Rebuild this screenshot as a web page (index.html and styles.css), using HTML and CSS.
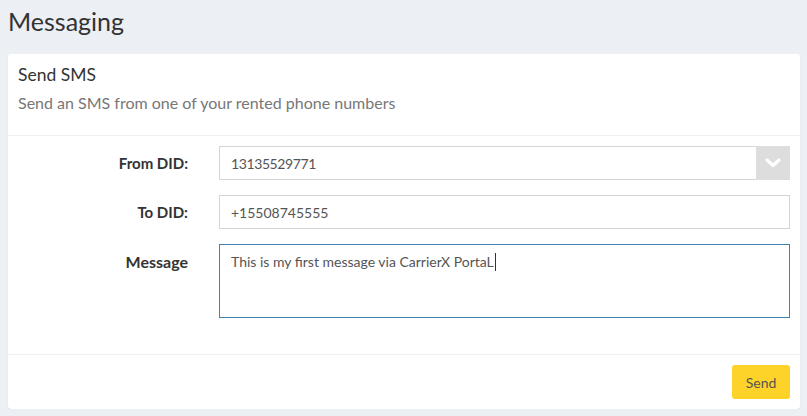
FILE: index.html
```html
<!DOCTYPE html>
<html>
<head>
<meta charset="utf-8">
<link rel="stylesheet" href="styles.css">
</head>
<body>
<h1 class="page-title">Messaging</h1>
<div class="card">
  <div class="card-header">
    <div class="card-title">Send SMS</div>
    <div class="card-sub">Send an SMS from one of your rented phone numbers</div>
  </div>
  <div class="card-body">
    <div class="row">
      <label class="lbl">From DID:</label>
      <div class="select">
        <span class="select-val">13135529771</span>
        <span class="select-arrow">
          <svg width="16" height="10" viewBox="0 0 16 10"><path d="M2 2 L8 7.5 L14 2" fill="none" stroke="#fff" stroke-width="3.2" stroke-linecap="round" stroke-linejoin="round"/></svg>
        </span>
      </div>
    </div>
    <div class="row">
      <label class="lbl">To DID:</label>
      <div class="input">+15508745555</div>
    </div>
    <div class="row row-top">
      <label class="lbl lbl-msg">Message</label>
      <div class="textarea">This is my first message via CarrierX PortaL<span class="caret"></span></div>
    </div>
  </div>
  <div class="card-footer">
    <button class="btn-send">Send</button>
  </div>
</div>
</body>
</html>
```
FILE: styles.css
```css
html, body {
  margin: 0;
  padding: 0;
  background: #eceff4;
  font-family: Lato, "Noto Sans", sans-serif;
  color: #333;
}
.page-title {
  margin: 0;
  padding: 6px 8px 0 8px;
  height: 48px;
  box-sizing: border-box;
  font-size: 25px;
  font-weight: 400;
  line-height: 30px;
  color: #333;
}
.card {
  margin: 6px 7px 0 8px;
  background: #fff;
  border-radius: 3px;
  box-shadow: 0 1px 1px rgba(0,0,0,0.12);
  height: 355px;
}
.card-header {
  height: 82px;
  box-sizing: border-box;
  padding: 10px 10px 0 10px;
  border-bottom: 1px solid #f0f0f0;
}
.card-title {
  font-size: 17.5px;
  line-height: 22px;
  color: #333;
}
.card-sub {
  margin-top: 7px;
  font-size: 16px;
  line-height: 20px;
  color: #777;
}
.card-body {
  padding: 10px 10px 0 10px;
  height: 219px;
  box-sizing: border-box;
  border-bottom: 1px solid #f0f0f0;
}
.row {
  display: grid;
  grid-template-columns: 170px 1fr;
  column-gap: 31px;
  align-items: center;
  margin-bottom: 15px;
}
.row-top {
  align-items: start;
}
.lbl {
  text-align: right;
  font-weight: 700;
  font-size: 15px;
  color: #333;
}
.lbl-msg {
  padding-top: 8px;
  font-size: 16px;
}
.select, .input {
  height: 34px;
  box-sizing: border-box;
  border: 1px solid #d4d4dc;
  display: flex;
  align-items: center;
  font-size: 14px;
  color: #555;
  padding-left: 11px;
}
.select {
  border-right: none;
  padding-right: 0;
}
.select-val {
  flex: 1;
  letter-spacing: -0.4px;
}
.select-arrow {
  width: 34px;
  height: 34px;
  margin-top: -1px;
  margin-bottom: -1px;
  background: #dddddd;
  display: flex;
  align-items: center;
  justify-content: center;
}
.textarea {
  height: 74px;
  box-sizing: border-box;
  border: 1px solid #3f82ad;
  font-size: 14px;
  color: #555;
  padding: 8px 11px;
  line-height: 18px;
}
.caret {
  display: inline-block;
  width: 1px;
  height: 18px;
  background: #333;
  vertical-align: top;
  margin-left: 1px;
}
.card-footer {
  display: flex;
  justify-content: flex-end;
  padding: 10px 10px 0 10px;
}
.btn-send {
  width: 58px;
  height: 34px;
  background: #fdd32a;
  border: none;
  border-radius: 3px;
  font-family: inherit;
  font-size: 14px;
  color: #555;
  padding: 0;
}
```
